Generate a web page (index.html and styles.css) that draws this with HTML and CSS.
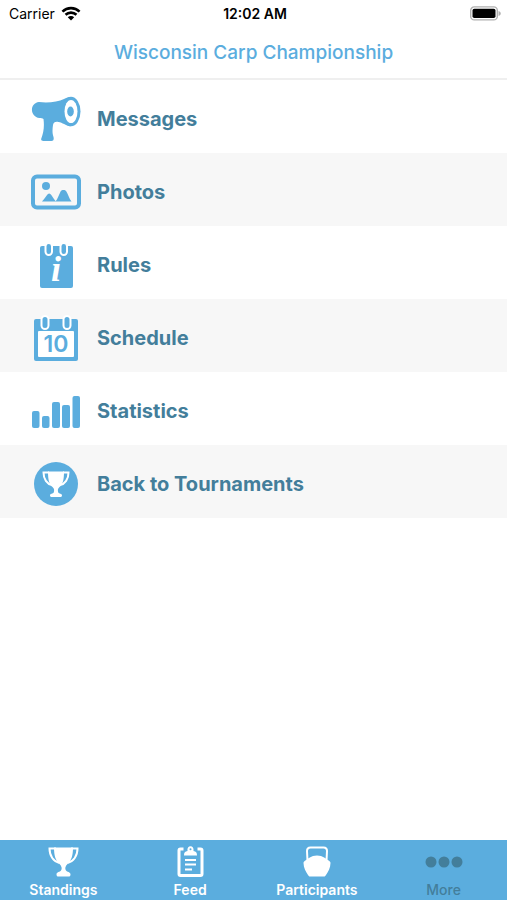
FILE: index.html
```html
<!DOCTYPE html>
<html lang="en">
<head>
    <meta charset="UTF-8">
    <meta name="viewport" content="width=device-width, initial-scale=1.0">
    <title>Wisconsin Carp Championship</title>
    <link rel="stylesheet" href="styles.css">
</head>
<body>
    <div class="status-bar">
        <div class="carrier">
            <span>Carrier</span>
            <svg width="20" height="15" viewBox="0 0 18 14" fill="none" stroke="#000" stroke-width="2.4">
                <path d="M1 5.2a11.5 11.5 0 0 1 16 0"/>
                <path d="M3.9 8.2a7.4 7.4 0 0 1 10.2 0"/>
                <path d="M9 13.5L6 10.5a4.3 4.3 0 0 1 6 0z" fill="#000" stroke="none"/>
            </svg>
        </div>
        <div class="time">12:02 AM</div>
        <div class="battery">
            <svg width="31" height="15" viewBox="0 0 31 15">
                <rect x="0.7" y="0.9" width="26.6" height="13" rx="3.5" fill="#fff" stroke="#b0b0b0" stroke-width="1.4"/>
                <rect x="2.5" y="2.8" width="23" height="9.2" rx="1.8" fill="#000"/>
                <path d="M28.5 5c3 1 3 4 0 5z" fill="#b0b0b0"/>
            </svg>
        </div>
    </div>

    <header class="header">
        <h1>Wisconsin Carp Championship</h1>
    </header>

    <main class="content">
        <ul class="menu">
            <li>
                <a href="#messages">
                    <svg class="menu-icon" viewBox="0 0 50 50">
                        <path d="M8 8c9 1 19 0 25-3 3-1.500 5-2 6.500-2v29.500c-5-1-8-4-12-4.500-3-.4-5 0-5.500 3-.5 4-1 7 .5 12 .7 3-.5 4-2 4h-8c-2 0-2.700-1-2.200-2.500 2.200-6 3.200-12 2.200-19.500-1-.8-2.500-.8-4-1C-1.500 22.500-1.500 9 8 8z"/>
                        <ellipse cx="40" cy="17.5" rx="9.500" ry="14.800"/>
                        <ellipse class="cut" cx="40" cy="17.500" rx="6.500" ry="11.500"/>
                        <ellipse cx="39.500" cy="17.500" rx="3.300" ry="5"/>
                    </svg>
                    <span>Messages</span>
                </a>
            </li>
            <li>
                <a href="#photos">
                    <svg class="menu-icon" viewBox="0 0 50 50">
                        <rect class="line" x="2" y="9.500" width="46" height="31" rx="4"/>
                        <circle cx="15" cy="19" r="4"/>
                        <path d="M11 34.500c1-1 4-5 5-6.500 1.300-2 3-2 4.300 0 1.200 1.700 3 4.500 4.700 6.500z"/>
                        <path d="M24.500 34.500c2-2 3.500-7 5.200-10.200 1-1.800 4.500-1.800 5.500 0 2 3.200 3 7.500 5.300 10.200z"/>
                    </svg>
                    <span>Photos</span>
                </a>
            </li>
            <li>
                <a href="#rules">
                    <svg class="menu-icon" viewBox="0 0 50 50">
                        <rect x="9" y="6" width="33" height="42" rx="2"/>
                        <rect class="ring" x="14.500" y="3" width="6.500" height="12" rx="3.200"/>
                        <rect class="ring" x="29.500" y="3" width="6.500" height="12" rx="3.200"/>
                        <text class="info" x="25" y="41">i</text>
                    </svg>
                    <span>Rules</span>
                </a>
            </li>
            <li>
                <a href="#schedule">
                    <svg class="menu-icon" viewBox="0 0 50 50">
                        <rect x="3" y="6" width="44" height="42" rx="2"/>
                        <rect class="cut" x="7" y="18" width="36" height="26" rx="1"/>
                        <rect class="ring" x="10.500" y="3" width="7" height="13" rx="3.500"/>
                        <rect class="ring" x="32.500" y="3" width="7" height="13" rx="3.500"/>
                        <text class="day" x="25" y="39">10</text>
                    </svg>
                    <span>Schedule</span>
                </a>
            </li>
            <li>
                <a href="#statistics">
                    <svg class="menu-icon" viewBox="0 0 50 50">
                        <rect x="1" y="25" width="7.500" height="17" rx="2"/>
                        <rect x="11" y="30" width="7.500" height="12" rx="2"/>
                        <rect x="21" y="16" width="8" height="26" rx="2"/>
                        <rect x="31" y="19" width="8" height="23" rx="2"/>
                        <rect x="41.500" y="10" width="7.500" height="32" rx="2"/>
                    </svg>
                    <span>Statistics</span>
                </a>
            </li>
            <li>
                <a href="#tournaments">
                    <svg class="menu-icon" viewBox="0 0 50 50">
                        <circle cx="25" cy="25" r="22"/>
                        <g class="cup">
                            <path d="M17 12.500h16c0 8-1 13-4.500 15.500-1.800 1.300-2 3.500-1.200 5.500.7 1.300 3.700 1 3.700 3 0 1.300-1 1.500-2 1.500h-8c-1 0-2-.2-2-1.500 0-2 3-1.700 3.700-3 .8-2 .6-4.200-1.200-5.500-3.500-2.500-4.500-7.500-4.500-15.500z"/>
                            <path class="handle" d="M18 13.500h-5.500c0 6.500 3.500 11.500 8.500 12.500M32 13.500h5.500c0 6.500-3.500 11.500-8.500 12.500"/>
                        </g>
                    </svg>
                    <span>Back to Tournaments</span>
                </a>
            </li>
        </ul>
    </main>

    <nav class="tab-bar">
        <a href="#standings">
            <svg width="32" height="32" viewBox="0 0 32 32">
                <path d="M7 1.500h19c0 8-1.500 13-5.500 16.500-2 1.700-3 4.500-1.500 6.500 1 1.600 4.500 1.200 4.500 4 0 1.700-1 2-2 2h-10c-1 0-2-.3-2-2 0-2.800 3.500-2.400 4.500-4 1.500-2 .5-4.800-1.500-6.500C8.500 14.500 7 9.500 7 1.500z"/>
                <path class="handle" d="M9 2.500H2.500c0 7.500 4 13 10 14.500M24 2.500h6.500c0 7.500-4 13-10 14.500"/>
            </svg>
            <span>Standings</span>
        </a>
        <a href="#feed">
            <svg width="32" height="32" viewBox="0 0 32 32">
                <path class="board" d="M9.500 3H6.500q-1.500 0-1.500 1.500v23.500q0 1.500 1.500 1.500h20q1.500 0 1.500-1.500V4.500q0-1.500-1.500-1.500h-3"/>
                <path d="M10 9.500c0-3 1-4 3.500-4.500C13 2 14.500.3 16.500.3s3.500 1.700 3 4.700C22 5.500 23 6.500 23 9.500z"/>
                <circle class="hole" cx="16.500" cy="3.300" r="1"/>
                <path class="rule" d="M11 14h11M11 18.500h11M11 23.500h7"/>
            </svg>
            <span>Feed</span>
        </a>
        <a href="#participants">
            <svg width="32" height="32" viewBox="0 0 32 32">
                <path class="grip" d="M6.500 15L6 5q0-3.500 3.500-3.500h13q3.500 0 3.500 3.500l-.5 10"/>
                <path d="M2.500 17c0-1 .7-1.700 1.500-2.200C7 13 10 9.500 16 9.500s9 3.500 12 5.300c.8.500 1.500 1.200 1.500 2.200 0 5-2.500 9-4.500 12-.5.800-1 1.500-2 1.500H9c-1 0-1.500-.7-2-1.500-2-3-4.500-7-4.500-12z"/>
            </svg>
            <span>Participants</span>
        </a>
        <a href="#more" class="active">
            <svg width="38" height="32" viewBox="0 0 38 32">
                <circle cx="6" cy="16" r="5.500"/>
                <circle cx="19" cy="16" r="5.500"/>
                <circle cx="32" cy="16" r="5.500"/>
            </svg>
            <span>More</span>
        </a>
    </nav>
</body>
</html>
```
FILE: styles.css
```css
* {
    box-sizing: border-box;
}

body {
    margin: 0;
    min-height: 100vh;
    display: flex;
    flex-direction: column;
    background-color: #fff;
    font-family: Inter, "Liberation Sans", sans-serif;
}

a {
    text-decoration: none;
}

.status-bar {
    display: grid;
    grid-template-columns: 1fr auto 1fr;
    align-items: center;
    height: 27px;
    padding: 0 6px 0 9px;
    font-size: 14px;
    color: #000;
}

.carrier {
    display: flex;
    align-items: center;
    gap: 6px;
}

.time {
    font-weight: 600;
}

.battery {
    display: flex;
    justify-content: flex-end;
}

.header {
    height: 53px;
    border-bottom: 2px solid #efefef;
    text-align: center;
}

.header h1 {
    margin: 0;
    font-size: 19px;
    font-weight: 500;
    line-height: 52px;
    color: #5badde;
}

.content {
    flex: 1;
}

.menu {
    margin: 0;
    padding: 0;
    list-style: none;
}

.menu li:nth-child(even) {
    background-color: #f7f7f7;
}

.menu a {
    display: flex;
    align-items: center;
    gap: 16px;
    height: 73px;
    padding: 5px 31px 0;
    font-size: 20px;
    font-weight: 700;
    color: #437e9b;
}

.menu-icon {
    width: 50px;
    height: 50px;
    fill: #5badde;
}

.menu-icon .cut {
    fill: #fff;
}

.menu-icon .line {
    fill: none;
    stroke: #5badde;
    stroke-width: 4;
}

.menu-icon .ring {
    stroke: #fff;
    stroke-width: 2;
}

.menu-icon .info {
    fill: #fff;
    font-family: "Liberation Serif", serif;
    font-size: 36px;
    font-style: italic;
    font-weight: 700;
    text-anchor: middle;
}

.menu-icon .day {
    font-size: 23px;
    font-weight: 600;
    text-anchor: middle;
}

.cup {
    fill: #fff;
}

.handle {
    fill: none;
    stroke: #fff;
    stroke-width: 2;
}

.tab-bar {
    display: grid;
    grid-template-columns: repeat(4, 1fr);
    height: 60px;
    padding-top: 6px;
    background-color: #5badde;
}

.tab-bar a {
    display: flex;
    flex-direction: column;
    align-items: center;
    font-size: 14px;
    font-weight: 600;
    line-height: 24px;
    color: #fff;
    fill: #fff;
}

.tab-bar .active {
    font-weight: 500;
    color: #437e9b;
    fill: #437e9b;
}

.board {
    fill: none;
    stroke: #fff;
    stroke-width: 3;
}

.hole {
    fill: #5badde;
}

.rule {
    stroke: #fff;
    stroke-width: 2;
}

.grip {
    fill: none;
    stroke: #fff;
    stroke-width: 2;
}
```
